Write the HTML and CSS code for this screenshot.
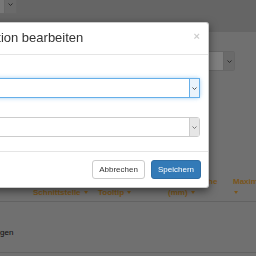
FILE: index.html
```html
<!DOCTYPE html>
<html lang="de">

<head>
    <meta charset="UTF-8">
    <meta name="viewport" content="width=device-width, initial-scale=1.0">
    <title>Position bearbeiten</title>
    <link rel="stylesheet" href="styles.css">
</head>

<body>
    <div class="page">
        <div class="toolbar">
            <div class="pick top-pick">
                <span class="pick-btn"><svg width="5" height="3" viewBox="0 0 5 3"><path d="M0.5 0.5 L2.5 2.5 L4.5 0.5" fill="none" stroke="#555" stroke-width="1"/></svg></span>
            </div>
        </div>
        <div class="filter">
            <div class="pick filter-pick">
                <span class="pick-btn"><svg width="5" height="3" viewBox="0 0 5 3"><path d="M0.5 0.5 L2.5 2.5 L4.5 0.5" fill="none" stroke="#555" stroke-width="1"/></svg></span>
            </div>
        </div>
        <div class="grid">
            <div class="th"><span></span></div>
            <div class="th"><span>Schnittstelle <i class="caret"></i></span></div>
            <div class="th"><span>Tooltip <i class="caret"></i></span></div>
            <div class="th"><span>Mindesthöhe (mm) <i class="caret"></i></span></div>
            <div class="th"><span>Maximalhöhe (mm) <i class="caret"></i></span></div>
            <div class="td">Anzeigen</div>
            <div class="td"></div>
            <div class="td"></div>
            <div class="td"></div>
            <div class="td"></div>
        </div>
    </div>

    <div class="backdrop"></div>

    <div class="modal">
        <div class="modal-header">
            <span class="close">&times;</span>
            <h4 class="modal-title">Position bearbeiten</h4>
        </div>
        <div class="modal-body">
            <div class="pick focus">
                <span class="pick-btn"><svg width="5" height="3" viewBox="0 0 5 3"><path d="M0.5 0.5 L2.5 2.5 L4.5 0.5" fill="none" stroke="#555" stroke-width="1"/></svg></span>
            </div>
            <div class="pick">
                <span class="pick-btn"><svg width="5" height="3" viewBox="0 0 5 3"><path d="M0.5 0.5 L2.5 2.5 L4.5 0.5" fill="none" stroke="#777" stroke-width="1"/></svg></span>
            </div>
        </div>
        <div class="modal-footer">
            <button class="btn btn-default">Abbrechen</button>
            <button class="btn btn-primary">Speichern</button>
        </div>
    </div>
</body>

</html>
```

FILE: styles.css
```css
* {
    margin: 0;
    padding: 0;
    box-sizing: border-box;
}

body {
    position: relative;
    width: 256px;
    height: 256px;
    overflow: hidden;
    font-family: "Liberation Sans", Arial, sans-serif;
    font-size: 8px;
    color: #333;
    background-color: #e0e0e0;
}

/* page behind the dialog */
.toolbar {
    display: flex;
    align-items: flex-end;
    height: 32px;
    padding-bottom: 18px;
    background-color: #cacaca;
}

.pick {
    display: flex;
    justify-content: flex-end;
    height: 20px;
    background-color: #fff;
    border: 1px solid #ccc;
    border-radius: 2px;
}

.pick-btn {
    display: flex;
    align-items: center;
    justify-content: center;
    width: 10px;
    background-color: #e6e6e6;
    border-left: 1px solid #ccc;
}

.top-pick {
    flex: none;
    width: 57px;
    margin-left: -40px;
    background-color: #eee;
}

.top-pick .pick-btn {
    width: 12px;
    background-color: #d4d4d4;
}

.filter {
    display: flex;
    justify-content: flex-end;
    height: 48px;
    padding: 19px 21px 0 0;
}

.filter-pick {
    width: 120px;
}

.filter-pick .pick-btn {
    width: 11px;
    background-color: #d4d4d4;
}

.grid {
    display: grid;
    grid-template-columns: 53px 65px 70px 65px 80px;
    width: 333px;
    margin-top: 91px;
    margin-left: -20px;
    line-height: 11px;
}

.th {
    display: flex;
    align-items: flex-end;
    height: 31px;
    padding-bottom: 3px;
    padding-right: 6px;
    font-weight: bold;
    color: #f2ab3a;
    border-bottom: 1px solid #c4c4c4;
}

.caret {
    display: inline-block;
    width: 0;
    height: 0;
    margin-left: 1px;
    vertical-align: middle;
    border-top: 3px solid;
    border-left: 2px solid transparent;
    border-right: 2px solid transparent;
}

.td {
    height: 51px;
    padding-top: 25px;
    color: #222;
    border-bottom: 1px solid #c4c4c4;
}

/* dialog */
.backdrop {
    position: fixed;
    top: 0;
    right: 0;
    bottom: 0;
    left: 0;
    background: rgba(0, 0, 0, .5);
}

.modal {
    position: absolute;
    top: 22px;
    left: -38px;
    width: 247px;
    background-color: #fff;
    border: 1px solid rgba(0, 0, 0, .2);
    border-radius: 3px;
    box-shadow: 0 3px 9px rgba(0, 0, 0, .5);
}

.modal-header {
    padding: 8px 8px 9px 9px;
    border-bottom: 1px solid #e5e5e5;
}

.modal-title {
    font-size: 13px;
    line-height: 14px;
    font-weight: normal;
    color: #333;
    white-space: nowrap;
}

.close {
    float: right;
    margin-top: -2px;
    font-size: 11px;
    line-height: 14px;
    font-weight: bold;
    color: #000;
    opacity: .2;
}

.modal-body {
    display: flex;
    flex-direction: column;
    gap: 19px;
    padding: 23px 8px 14px;
}

.modal-body .pick {
    border-radius: 3px;
}

.pick.focus {
    border-color: #66afe9;
    box-shadow: 0 0 4px rgba(102, 175, 233, .6);
}

.pick.focus .pick-btn {
    background-color: #eaf3fb;
    border: 1px solid #66afe9;
    margin: -1px -1px -1px 0;
    width: 11px;
}

.modal-footer {
    display: flex;
    justify-content: flex-end;
    gap: 6px;
    padding: 8px 7px;
    border-top: 1px solid #e5e5e5;
}

.btn {
    height: 19px;
    font-family: "Liberation Sans", Arial, sans-serif;
    font-size: 8px;
    line-height: 17px;
    text-align: center;
    border: 1px solid;
    border-radius: 3px;
}

.btn-default {
    width: 53px;
    color: #333;
    background-color: #fff;
    border-color: #ccc;
}

.btn-primary {
    width: 50px;
    color: #fff;
    background-color: #337ab7;
    border-color: #2e6da4;
}
```
